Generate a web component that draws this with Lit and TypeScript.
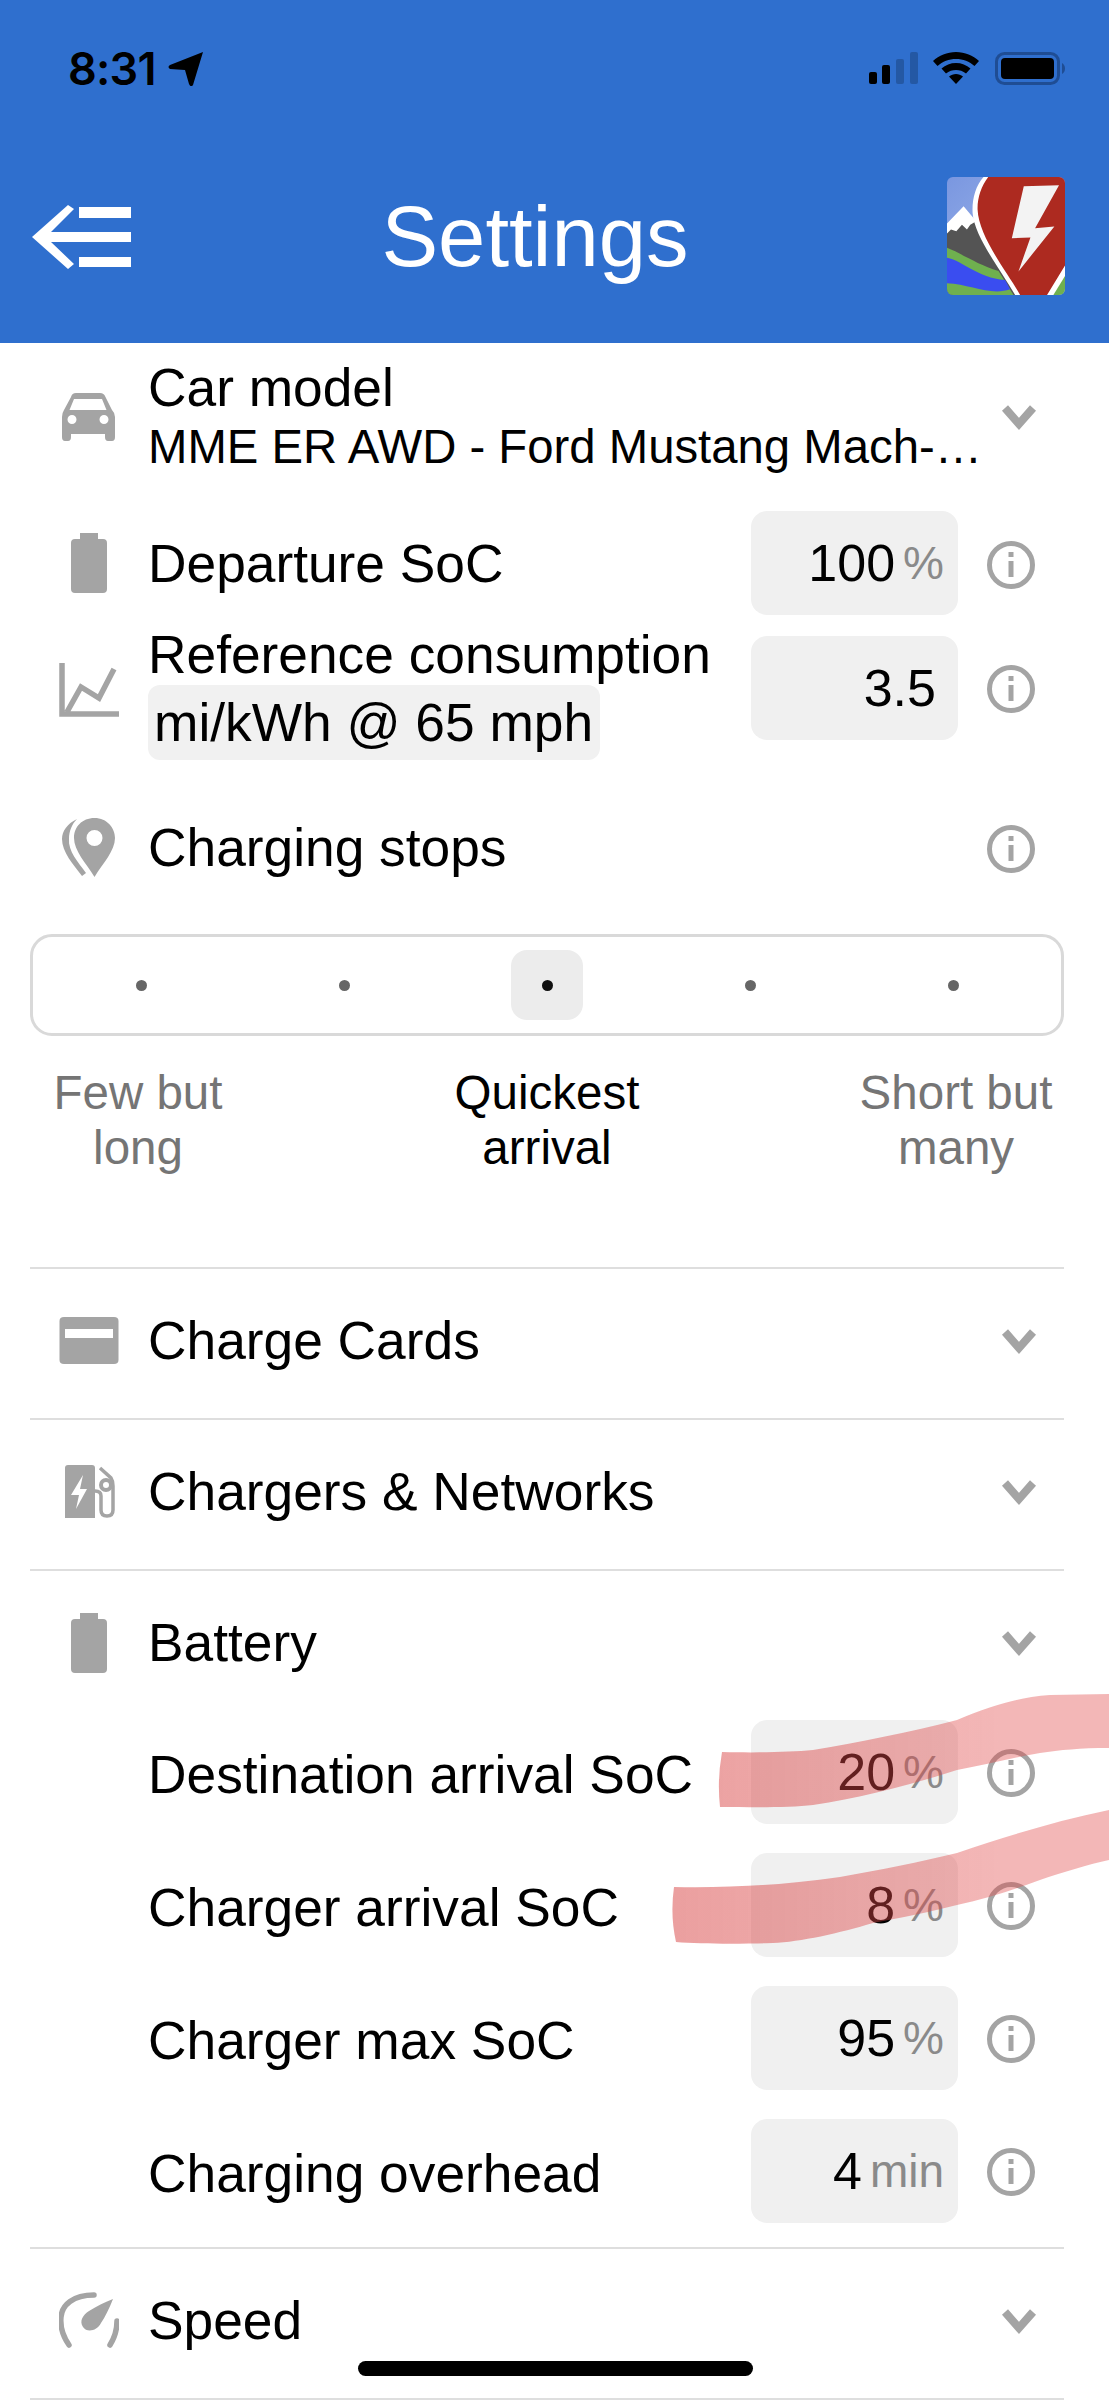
import { LitElement, html, css, svg } from "lit";
import { customElement } from "lit/decorators.js";

const infoIcon = html`<svg class="info" viewBox="0 0 48 48"><circle cx="24" cy="24" r="21.5" fill="none" stroke="#a4a4a4" stroke-width="5"/><rect x="21.5" y="11" width="5" height="5" fill="#a4a4a4"/><rect x="21.5" y="20" width="5" height="16" fill="#a4a4a4"/></svg>`;
const chevron = html`<svg class="chev" viewBox="0 0 40 28"><path d="M6 5 L20 21 L34 5" fill="none" stroke="#a4a4a4" stroke-width="8"/></svg>`;

const car = html`<svg class="ico" viewBox="0 0 60 60" ><path transform="translate(-1 0)" fill="#a4a4a4" fill-rule="evenodd" d="M18 6 H42 Q46 6 47.500 10 L54 23 Q57 26 57 30 V50 Q57 54 54 54 H50 Q47 54 47 50 V47 H13 V50 Q13 54 10 54 H7 Q4 54 4 50 V30 Q4 26 6 23 L13 10 Q14 6 18 6 Z M16 12 L11.500 23 H48.500 L44 12 Z M14 28 A4.500 4.500 0 1 0 14 37 A4.500 4.500 0 1 0 14 28 Z M46 28 A4.500 4.500 0 1 0 46 37 A4.500 4.500 0 1 0 46 28 Z"/></svg>`;
const battery = html`<svg class="ico" viewBox="0 0 60 60"><path fill="#a4a4a4" d="M21 0 H39 V6 H44 Q48 6 48 10 V56 Q48 60 44 60 H16 Q12 60 12 56 V10 Q12 6 16 6 H21 Z"/></svg>`;
const chart = html`<svg class="ico" viewBox="0 0 60 60"><path fill="none" stroke="#a4a4a4" stroke-width="5.500" d="M3 3 V54 H60 M8 52 L22 27 L40 38 L55 9"/></svg>`;
const pin = html`<svg class="ico" viewBox="0 0 60 60"><path fill="#a4a4a4" fill-rule="evenodd" d="M35.500 1 C48 1 56 11 56 21 C56 34 44 46 35.500 60 C27 46 15 34 15 21 C15 10 23 1 35.500 1 Z M35.500 13 A8 8 0 1 0 35.500 29 A8 8 0 1 0 35.500 13 Z"/><path fill="#a4a4a4" d="M18 2 C8 7 3 14 3 22 C3 35 14 47 23 59 L27 56 C19 45 9 34 10 22 C10 14 13 7 18 2 Z"/></svg>`;
const card = html`<svg class="ico" viewBox="0 0 60 60"><path fill="#a4a4a4" fill-rule="evenodd" d="M5 6 H55 Q59.500 6 59.500 10 V49 Q59.500 53 55 53 H5 Q0.500 53 0.500 49 V10 Q0.500 6 5 6 Z M6 18 V27 H54 V18 Z"/></svg>`;
const charger = html`<svg class="ico" viewBox="0 0 60 60"><path fill="#a4a4a4" fill-rule="evenodd" d="M9 3 H33 Q36 3 36 6 V56 H6 V6 Q6 3 9 3 Z M24 13 L12 33 H20 L17 47 L28 27 H21 Z"/><path fill="none" stroke="#a4a4a4" stroke-width="3.500" d="M41 6 L52 16 Q54 19 54 24 V48 Q54 54 48 54 Q42 54 42 48 V34 Q42 29 36 29"/><circle cx="47" cy="23" r="5" fill="none" stroke="#a4a4a4" stroke-width="4"/></svg>`;
const speed = html`<svg class="ico" viewBox="0 0 60 60"><path fill="none" stroke="#a4a4a4" stroke-width="5.500" stroke-linecap="round" d="M10 54 C3 44 1 36 2 26 C3 14 14 4 35 4 M51 54 C56 46 58 40 58 30"/><path fill="#a4a4a4" d="M54 8 C50 18 46 26 42 32 C38 40 28 42 24 36 C20 30 24 24 30 20 C38 15 46 11 54 8 Z"/></svg>`;

const logo = svg`<svg class="logo" viewBox="80 82 355 355">
  <defs><clipPath id="lc"><rect x="80" y="82" width="355" height="355" rx="18"/></clipPath>
  <linearGradient id="sky" x1="0" y1="0" x2="1" y2="1"><stop offset="0" stop-color="#7a97e0"/><stop offset="1" stop-color="#a9bfee"/></linearGradient></defs>
  <g clip-path="url(#lc)">
    <rect x="80" y="82" width="355" height="355" fill="url(#sky)"/>
    <path fill="#545454" d="M80 250 L130 175 L190 250 L290 437 H80 Z"/>
    <path fill="#fff" d="M80 222 L130 170 L168 215 L150 226 L140 240 L125 226 L108 245 L92 240 L80 252 Z"/>
    <path fill="#6fb04f" d="M80 295 C120 310 170 345 235 365 L280 437 H80 Z"/>
    <path fill="#3a4df0" d="M80 325 C130 335 170 385 255 392 L270 420 C210 440 150 405 80 402 Z"/>
    <path fill="#6fb04f" d="M435 340 L385 437 H435 Z"/>
    <path fill="#fff" d="M190 82 C165 110 155 150 157 190 C162 260 240 360 285 437 H305 L240 82 Z"/>
    <path fill="#fff" d="M435 345 L375 437 H400 L435 380 Z"/>
    <path fill="#ad2a20" d="M204 82 H435 V348 L381 437 H300 C270 380 175 265 172 180 C171 145 183 110 204 82 Z"/>
    <path fill="#f3f3f3" d="M311 110 L417 107 L345 236 L403 231 L295 366 L331 264 L275 266 Z"/>
  </g>
</svg>`;

@customElement("app-root")
export class AppRoot extends LitElement {
  static styles = css`
    :host {
      display: block;
      position: relative;
      width: 1109px;
      height: 2400px;
      overflow: hidden;
      background: #fff;
      color: #000;
      font-family: "Liberation Sans", Arial, sans-serif;
      font-size: 53.3px;
    }
    .header {
      height: 343px;
      background: #2f6fce;
      box-sizing: border-box;
      padding: 0 44px 0 32px;
      display: flex;
      flex-direction: column;
    }
    .status {
      height: 136px;
      padding-top: 52px;
      box-sizing: border-box;
      display: flex;
      align-items: flex-start;
      margin-right: -1px;
    }
    .time {
      font-family: Inter, "Liberation Sans", sans-serif;
      font-weight: 600;
      font-size: 45px;
      line-height: 34px;
      letter-spacing: -0.8px;
      margin-left: 36px;
    }
    .arrow { width: 36px; height: 34px; margin-left: 12px; }
    .sp { flex: 1; }
    .sig { width: 50px; height: 32px; }
    .wifi { width: 48px; height: 32px; margin-left: 13px; }
    .batt { width: 71px; height: 33px; margin-left: 15px; }
    .nav {
      display: grid;
      grid-template-columns: 100px 1fr 118px;
      align-items: start;
    }
    .back { width: 100px; height: 64px; margin-top: 69px; }
    .title {
      color: #fff;
      font-size: 85px;
      line-height: 100px;
      text-align: center;
      margin-top: 51px;
      margin-left: -9px;
    }
    .logo { display: block; width: 118px; height: 118px; margin-top: 41px; }

    .list { padding: 0 45px 0 30px; display: flex; flex-direction: column; }
    .row { display: flex; align-items: center; }
    .cell { width: 118px; flex: none; display: flex; align-items: center; justify-content: center; }
    .ico { width: 60px; height: 60px; display: block; }
    .grow { flex: 1; min-width: 0; }
    .chev { width: 40px; height: 28px; display: block; flex: none; }
    .info { width: 48px; height: 48px; display: block; flex: none; margin: 3px 29px 0; }
    .input {
      width: 207px;
      height: 104px;
      flex: none;
      background: #f0f0f0;
      border-radius: 16px;
      box-sizing: border-box;
      padding-right: 14px;
      display: flex;
      align-items: center;
      justify-content: flex-end;
      font-size: 52px;
    }
    .input.nounit { padding-right: 22px; }
    .unit { color: #8a8a8a; font-size: 46px; margin-left: 8px; }

    .car { height: 148px; padding-right: 25px; box-sizing: border-box; }
    .car .l1 { line-height: 60px; margin-top: -1px; }
    .car .l2 { font-size: 47.3px; line-height: 58px; white-space: nowrap; }
    .dep { height: 144px; }
    .ref { height: 140px; align-items: flex-start; }
    .ref .cell { height: 110px; }
    .ref .input { margin-top: 1px; }
    .ref .l1 { line-height: 60px; margin-top: -10px; }
    .chip {
      display: inline-block;
      background: #f1f1f1;
      border-radius: 12px;
      padding: 0 7px 0 6px;
      height: 75px;
      line-height: 76px;
    }
    .stops { height: 144px; }

    .slider {
      margin-top: 15px;
      height: 102px;
      box-sizing: border-box;
      border: 3px solid #d9d9d9;
      border-radius: 22px;
      display: flex;
      justify-content: center;
      align-items: center;
    }
    .step { width: 203px; height: 70px; display: flex; align-items: center; justify-content: center; }
    .dot { width: 72px; height: 70px; display: flex; align-items: center; justify-content: center; border-radius: 16px; }
    .dot i { width: 11px; height: 11px; border-radius: 50%; background: #666; display: block; }
    .dot.on { background: #ececec; }
    .dot.on i { background: #111; }
    .labels {
      margin-top: 29px;
      display: grid;
      grid-template-columns: 216px 1fr 216px;
      text-align: center;
      font-size: 47.5px;
      line-height: 55px;
      color: #757575;
      height: 202px;
    }
    .labels .on { color: #000; }

    .sec {
      border-top: 2px solid #dedede;
      height: 151px;
      box-sizing: border-box;
      padding: 0 25px 6px 0;
    }
    .sub { height: 133px; align-items: flex-start; }
    .sub .txt { margin-left: 118px; line-height: 104px; margin-top: 3px; white-space: nowrap; }
    .sub .info { margin-top: 29px; }
    .sec.tail { margin-top: -5px; }
    .ref .info { margin-top: 30px; }

    .home {
      position: absolute;
      left: 358px;
      top: 2361px;
      width: 395px;
      height: 15px;
      border-radius: 8px;
      background: #000;
    }
    .scribble { position: absolute; left: 0; top: 0; width: 1109px; height: 2400px; pointer-events: none; filter: blur(0.7px); }
  `;

  private sub(label: string, val: string, unit: string) {
    return html`<div class="row sub">
      <div class="txt grow">${label}</div>
      <div class="input">${val}<span class="unit">${unit}</span></div>
      ${infoIcon}
    </div>`;
  }

  private sec(icon: unknown, label: string, extra = "") {
    return html`<div class="row sec ${extra}">
      <div class="cell">${icon}</div>
      <div class="grow">${label}</div>
      ${chevron}
    </div>`;
  }

  render() {
    return html`
      <div class="header">
        <div class="status">
          <span class="time">8:31</span>
          <svg class="arrow" viewBox="0 0 36 34"><path fill="#000" d="M35 0 L25 33 Q23 36 21 32 L17 18 L2 17 Q-1 15 2 13 Z"/></svg>
          <span class="sp"></span>
          <svg class="sig" viewBox="0 0 50 32">
            <rect x="0" y="20" width="8" height="12" rx="2" fill="#000"/>
            <rect x="13" y="13" width="8" height="19" rx="2" fill="#000"/>
            <rect x="27" y="7" width="8" height="25" rx="2" fill="#2458a4"/>
            <rect x="41" y="0" width="8" height="32" rx="2" fill="#2458a4"/>
          </svg>
          <svg class="wifi" viewBox="0 0 48 32">
            <path fill="#000" d="M24 0 C33 0 41 3.500 47 9 L42.500 14 C37.500 9.500 31 7 24 7 C17 7 10.500 9.500 5.500 14 L1 9 C7 3.500 15 0 24 0 Z"/>
            <path fill="#000" d="M24 11 C29.500 11 34.500 13 38.500 16.500 L34 21.500 C31 19 27.500 18 24 18 C20.500 18 17 19 14 21.500 L9.500 16.500 C13.500 13 18.500 11 24 11 Z"/>
            <path fill="#000" d="M24 22 C26.500 22 29 23 31 24.500 L24 32 L17 24.500 C19 23 21.500 22 24 22 Z"/>
          </svg>
          <svg class="batt" viewBox="0 0 71 33">
            <rect x="1.500" y="1.500" width="62" height="30" rx="8" fill="none" stroke="#1f4d94" stroke-width="3"/>
            <rect x="6" y="6" width="53" height="21" rx="4" fill="#000"/>
            <path d="M67 11 Q70 13 70 16.500 Q70 20 67 22 Z" fill="#1f4d94"/>
          </svg>
        </div>
        <div class="nav">
          <svg class="back" viewBox="0 0 100 64">
            <path fill="#fff" d="M36 0 L42 4 L19 27 H99 V37 H19 L42 59 L36 64 L0 32 Z"/>
            <rect x="47" y="2" width="52" height="11" fill="#fff"/>
            <rect x="47" y="52" width="52" height="10" fill="#fff"/>
          </svg>
          <div class="title">Settings</div>
          ${logo}
        </div>
      </div>

      <div class="list">
        <div class="row car">
          <div class="cell">${car}</div>
          <div class="grow"><div class="l1">Car model</div><div class="l2">MME ER AWD - Ford Mustang Mach-…</div></div>
          ${chevron}
        </div>
        <div class="row dep">
          <div class="cell">${battery}</div>
          <div class="grow">Departure SoC</div>
          <div class="input">100<span class="unit">%</span></div>
          ${infoIcon}
        </div>
        <div class="row ref">
          <div class="cell">${chart}</div>
          <div class="grow"><div class="l1">Reference consumption</div><span class="chip">mi/kWh @ 65 mph</span></div>
          <div class="input nounit">3.5</div>
          ${infoIcon}
        </div>
        <div class="row stops">
          <div class="cell">${pin}</div>
          <div class="grow">Charging stops</div>
          ${infoIcon}
        </div>
        <div class="slider">
          ${[0, 1, 2, 3, 4].map(
            (i) => html`<div class="step"><div class="dot ${i === 2 ? "on" : ""}"><i></i></div></div>`
          )}
        </div>
        <div class="labels">
          <div>Few but<br />long</div>
          <div class="on">Quickest<br />arrival</div>
          <div>Short but<br />many</div>
        </div>
        ${this.sec(card, "Charge Cards")}
        ${this.sec(charger, "Chargers & Networks")}
        ${this.sec(battery, "Battery")}
        ${this.sub("Destination arrival SoC", "20", "%")}
        ${this.sub("Charger arrival SoC", "8", "%")}
        ${this.sub("Charger max SoC", "95", "%")}
        ${this.sub("Charging overhead", "4", "min")}
        ${this.sec(speed, "Speed", "tail")}
        <div class="sec"></div>
      </div>

      <svg class="scribble" viewBox="0 0 1109 2400">
        <defs>
          <linearGradient id="ink" gradientUnits="userSpaceOnUse" x1="680" y1="0" x2="1000" y2="0">
            <stop offset="0" stop-color="rgba(215,65,65,.5)"/>
            <stop offset="1" stop-color="rgba(225,75,75,.4)"/>
          </linearGradient>
        </defs>
        <path fill="url(#ink)" d="M722 1752 C760 1753 790 1752 813 1750 C860 1742 910 1732 957 1720 C990 1706 1020 1697 1050 1695 L1109 1694 V1748 C1080 1748 1060 1750 1040 1753 C1010 1758 985 1765 957 1770 C910 1785 860 1798 813 1805 C790 1808 750 1807 720 1807 Q717 1780 722 1752 Z"/>
        <path fill="url(#ink)" d="M674 1887 C720 1888 780 1886 840 1877 C880 1870 920 1862 957 1853 C1010 1835 1060 1820 1109 1810 V1860 C1090 1864 1060 1873 1040 1880 C1010 1891 985 1899 957 1905 C930 1912 900 1918 873 1923 C840 1933 800 1942 773 1943 C740 1944 700 1944 676 1942 Q670 1915 674 1887 Z"/>
      </svg>
      <div class="home"></div>
    `;
  }
}
